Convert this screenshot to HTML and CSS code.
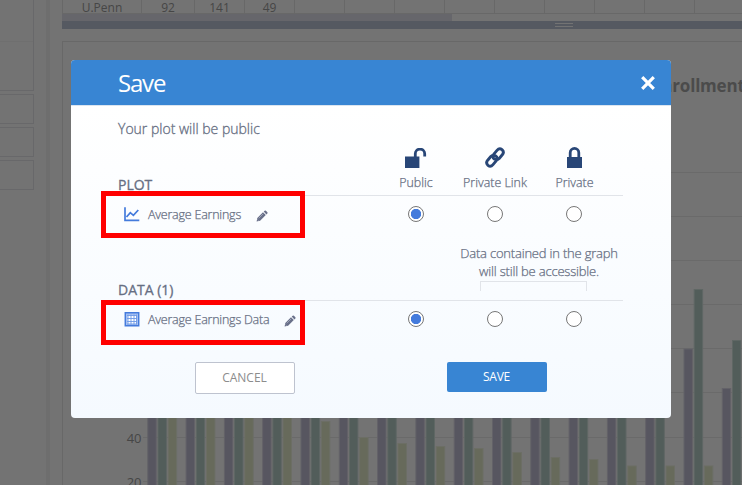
FILE: index.html
```
<!DOCTYPE html>
<html lang="en">
<head>
<meta charset="utf-8">
<title>Save</title>
<link rel="stylesheet" href="styles.css">
</head>
<body>
<div class="app">
  <aside class="sidebar">
    <div class="side-box tall"></div>
    <div class="side-box"></div>
    <div class="side-box"></div>
    <div class="side-box"></div>
  </aside>
  <div class="divider"></div>
  <main class="workspace">
    <div class="cells">
      <span>U.Penn</span><span>92</span><span>141</span><span>49</span><span></span><span></span><span></span><span></span><span></span><span></span><span></span><span></span><span></span>
    </div>
    <div class="scroll"><div class="thumb"></div></div>
    <div class="splitter"><i class="grip"></i></div>
    <section class="plot">
      <h2 class="plot-title">Enrollment</h2>
      <svg class="chart" width="679" height="443" viewBox="63 42 679 443">
        <path class="grid" d="M143 172.5H742M143 216.5H742M143 260.5H742M143 304.5H742M143 348.5H742M143 392.5H742M143 437.5H742M143 481.5H742"/>
        <g id="bars"></g>
        <text class="tick" x="141.5" y="443">40</text>
        <text class="tick" x="141.5" y="487">20</text>
      </svg>
    </section>
  </main>
</div>

<div class="modal">
  <header class="modal-head">
    <h1>Save</h1>
    <svg class="close" width="14" height="14" viewBox="0 0 14 14"><path d="M1.2 1.2L12.8 12.8M12.8 1.2L1.2 12.8"/></svg>
  </header>
  <div class="modal-body">
    <p class="lead">Your plot will be public</p>
    <div class="row head-row">
      <h3>PLOT</h3>
      <div class="option">
        <svg width="22" height="20" viewBox="0 0 22 20"><path class="fill" d="M0 8.5h14.4V20H0z"/><path class="shackle" d="M10.3 9V5.8a4.7 4.7 0 0 1 9.4 0v2.7"/></svg>
        <span>Public</span>
      </div>
      <div class="option">
        <svg width="20" height="21" viewBox="0 0 20 21"><g class="chain"><path d="M8.4 7.6L12 3.4Q14.4.6 17 2.7Q19.6 5 17.3 7.8L14.2 11.4Q12 13.6 9.3 12.1Q7.4 10.6 8.3 8.7"/><path d="M11.6 13.4L8 17.6Q5.6 20.4 3 18.3Q.4 16 2.7 13.2L5.8 9.6Q8 7.4 10.7 8.9Q12.6 10.4 11.7 12.3"/></g></svg>
        <span>Private Link</span>
      </div>
      <div class="option shift">
        <svg width="15" height="21" viewBox="0 0 15 21"><path class="fill" d="M0 10h15v11H0z"/><path class="shackle" d="M3.2 10.5V5.7a4.3 4.3 0 0 1 8.6 0v4.8"/></svg>
        <span>Private</span>
      </div>
    </div>
    <div class="row file-row">
      <div class="file">
        <svg class="type" width="16" height="15" viewBox="0 0 16 15"><path class="line" d="M1 .3V13.4H15.3"/><path class="line" d="M2.5 10L6.3 5.6L9.4 8.4L14.3 3"/></svg>
        <span>Average Earnings</span>
        <svg class="pen" width="12" height="12" viewBox="0 0 12 12"><path d="M.6 11.4L1.3 8L7 2.3L9.8 5.1L4.1 10.8zM7.7 1.6L8.7.7Q9.3.2 9.9.7L11.4 2.2Q11.8 2.8 11.4 3.4L10.4 4.4z"/><path class="glint" d="M2.7 8.3L7.2 3.8M1.5 9.5L2.6 10.6"/></svg>
      </div>
      <i class="radio on"></i><i class="radio"></i><i class="radio"></i>
    </div>
    <div class="row note-row">
      <h3>DATA (1)</h3>
      <div class="note">Data contained in the graph<br>will still be accessible.<div class="bracket"></div></div>
    </div>
    <div class="row file-row">
      <div class="file">
        <svg class="type" width="15" height="15" viewBox="0 0 15 15"><path class="sheet" d="M.8.8H14.2V13.7H.8z"/><path class="cells-bg" d="M3 3H12V12H3z"/><path class="rules" d="M2.5 3.5H12.5M2.5 6.5H12.5M2.5 9.5H12.5M2.5 12H12.5M3.5 2.5V12.5M6.5 2.5V12.5M9.5 2.5V12.5M12 2.5V12.5"/></svg>
        <span>Average Earnings Data</span>
        <svg class="pen" width="12" height="12" viewBox="0 0 12 12"><path d="M.6 11.4L1.3 8L7 2.3L9.8 5.1L4.1 10.8zM7.7 1.6L8.7.7Q9.3.2 9.9.7L11.4 2.2Q11.8 2.8 11.4 3.4L10.4 4.4z"/><path class="glint" d="M2.7 8.3L7.2 3.8M1.5 9.5L2.6 10.6"/></svg>
      </div>
      <i class="radio on"></i><i class="radio"></i><i class="radio"></i>
    </div>
    <div class="actions">
      <button class="btn cancel">CANCEL</button>
      <button class="btn save">SAVE</button>
    </div>
  </div>
  <div class="mark mark-plot"></div>
  <div class="mark mark-data"></div>
</div>
<script src="chart.js"></script>
</body>
</html>
```
FILE: styles.css
```
* { box-sizing: border-box; }
body { margin: 0; width: 742px; height: 485px; overflow: hidden; background: #737373; font-family: "Open Sans", sans-serif; }
h1, h2, h3, p { margin: 0; }
.app { display: flex; height: 485px; }
.sidebar { width: 46px; display: flex; flex-direction: column; gap: 3px; }
.side-box { width: 34px; height: 30px; border: 1px solid #68686a; border-left: 0; }
.side-box.tall { height: 91px; border-top: 0; background: linear-gradient(#6f6f6f, #6f6f6f) 0 41px / 100% 1px no-repeat; }
.divider { width: 4px; background: #6e6e6e; }
.workspace { width: 680px; margin-left: 12px; display: flex; flex-direction: column; }
.cells { display: grid; grid-template-columns: 79px 53px repeat(11, 50px); height: 14px; border-bottom: 1px solid #686868; flex: none; }
.cells span { border-left: 1px solid #686868; font-size: 12px; line-height: 15px; color: #464646; text-align: center; height: 13px; }
.scroll { height: 7px; flex: none; }
.thumb { width: 390px; height: 7px; background: #66666b; }
.splitter { height: 8px; flex: none; background: #555961; display: flex; justify-content: center; padding: 2px 0 0 324px; }
.grip { width: 18px; height: 4px; border-top: 1px solid #737373; border-bottom: 1px solid #737373; }
.plot { margin-top: 12px; height: 444px; border: 1px solid #686868; border-width: 1px 0 0 1px; position: relative; }
.plot-title { position: absolute; left: 589px; top: 32px; font-size: 17px; line-height: 24px; letter-spacing: -.2px; color: #4b4b4b; white-space: nowrap; }
.chart { display: block; }
.grid { stroke: #6a6a6a; fill: none; }
.tick { font-size: 13px; fill: #464646; text-anchor: end; }
.bar-a { fill: #575660; stroke: #636268; }
.bar-b { fill: #525d5a; stroke: #5f6764; }
.bar-c { fill: #676a5b; stroke: #6c6e65; }

.modal { position: absolute; left: 71px; top: 60px; width: 600px; height: 358px; border-radius: 4px; overflow: hidden; background: linear-gradient(#fff 45px, #f5faff); color: #666e82; }
.modal-head { height: 45px; background: #3885d3; display: flex; justify-content: space-between; align-items: center; padding: 0 16px 0 47px; }
.modal-head h1 { color: #fff; font-size: 24px; font-weight: 400; letter-spacing: -1.2px; line-height: 44px; }
.close { stroke: #fff; stroke-width: 3.2; fill: none; margin-top: 1px; }
.modal-body { padding: 13px 48px 0 47px; border-top: 1px solid #dbe5f0; }
.lead { font-size: 14px; font-weight: 300; line-height: 20px; height: 25px; -webkit-text-stroke: .3px; }
.row { display: grid; grid-template-columns: 258px 79px 79px 79px 10px; }
.row h3 { font-size: 14px; font-weight: 400; line-height: 20px; align-self: end; -webkit-text-stroke: .3px; }
.head-row { height: 52px; border-bottom: 1px solid #e1e4e9; }
.option { display: flex; flex-direction: column; align-items: center; justify-content: flex-end; font-size: 12.4px; line-height: 17px; font-weight: 300; padding-bottom: 4px; -webkit-text-stroke: .25px; }
.option span { margin: 6px 0 0 1px; }
.shift { padding-left: 1px; }
.fill { fill: #284677; }
.shackle { fill: none; stroke: #284677; stroke-width: 2.8; }
.chain { fill: none; stroke: #284677; stroke-width: 2.9; }
.file-row { height: 38px; align-items: center; padding-bottom: 2px; }
.file { display: flex; align-items: center; font-size: 12.5px; font-weight: 300; letter-spacing: -.22px; padding-left: 6px; white-space: nowrap; -webkit-text-stroke: .25px; }
.type { width: 16px; margin-right: 8px; }
.pen { margin-left: 15px; margin-top: 3px; fill: #69708a; }
.glint { stroke: #a9afbf; stroke-width: .8; fill: none; }
.line { fill: none; stroke: #447bdc; stroke-width: 1.7; }
.sheet { fill: #a9c3f2; stroke: #447bdc; stroke-width: 1.5; }
.cells-bg { fill: #fff; }
.rules { stroke: #6c98e6; stroke-width: .9; }
.radio { justify-self: center; width: 16px; height: 16px; border: 1px solid #777; border-radius: 50%; background: #fff; }
.radio.on { background: radial-gradient(circle, #447bdc 4.8px, #fff 5.5px); }
.note-row { height: 67px; border-bottom: 1px solid #e1e4e9; }
.note { grid-column: 3 / 6; width: 168px; font-size: 13px; line-height: 18px; font-weight: 300; letter-spacing: -.2px; text-align: center; padding-top: 10px; white-space: nowrap; justify-self: end; -webkit-text-stroke: .25px; }
.bracket { width: 107px; height: 10px; border: 1px solid #e1e4e9; border-bottom: 0; margin: 1px 0 0 25px; }
.actions { display: flex; justify-content: space-between; align-items: flex-start; padding: 23px 76px 0 77px; }
.btn { width: 100px; height: 32px; border-radius: 2px; padding: 0 1px 1px 0; font: 400 12px "Open Sans", sans-serif; }
.cancel { border: 1px solid #bec3cf; background: #fff; color: #8c8c8c; }
.save { border: 0; height: 30px; background: #3885d3; color: #fff; letter-spacing: -.2px; }
.mark { position: absolute; left: 30px; width: 204px; border: 5px solid #f00; }
.mark-plot { top: 131px; height: 47px; }
.mark-data { top: 240px; height: 45px; }
```
FILE: chart.js
```
// Top edge of each bar, by series
const tops = {
  a: [250, 250, 250, 250, 250, 250, 250, 250, 250, 250, 250, 250, 250, 250, 349, 388.5],
  b: [250, 250, 250, 250, 250, 250, 250, 250, 250, 250, 250, 250, 250, 250, 289.5, 340.5],
  c: [250, 250, 250, 250, 421.5, 437.5, 443.5, 446.5, 448.5, 452.5, 457.5, 459.5, 466, 466, 466, 466]
};
const offset = { a: 0, b: 10.2, c: 20.4 };
const group = document.getElementById("bars");
for (const key of Object.keys(tops)) {
  tops[key].forEach((top, i) => {
    const bar = document.createElementNS("http://www.w3.org/2000/svg", "rect");
    bar.setAttribute("class", "bar-" + key);
    bar.setAttribute("x", 147.8 + i * 38.3 + offset[key]);
    bar.setAttribute("y", top);
    bar.setAttribute("width", 8.4);
    bar.setAttribute("height", 500 - top);
    group.appendChild(bar);
  });
}
```
